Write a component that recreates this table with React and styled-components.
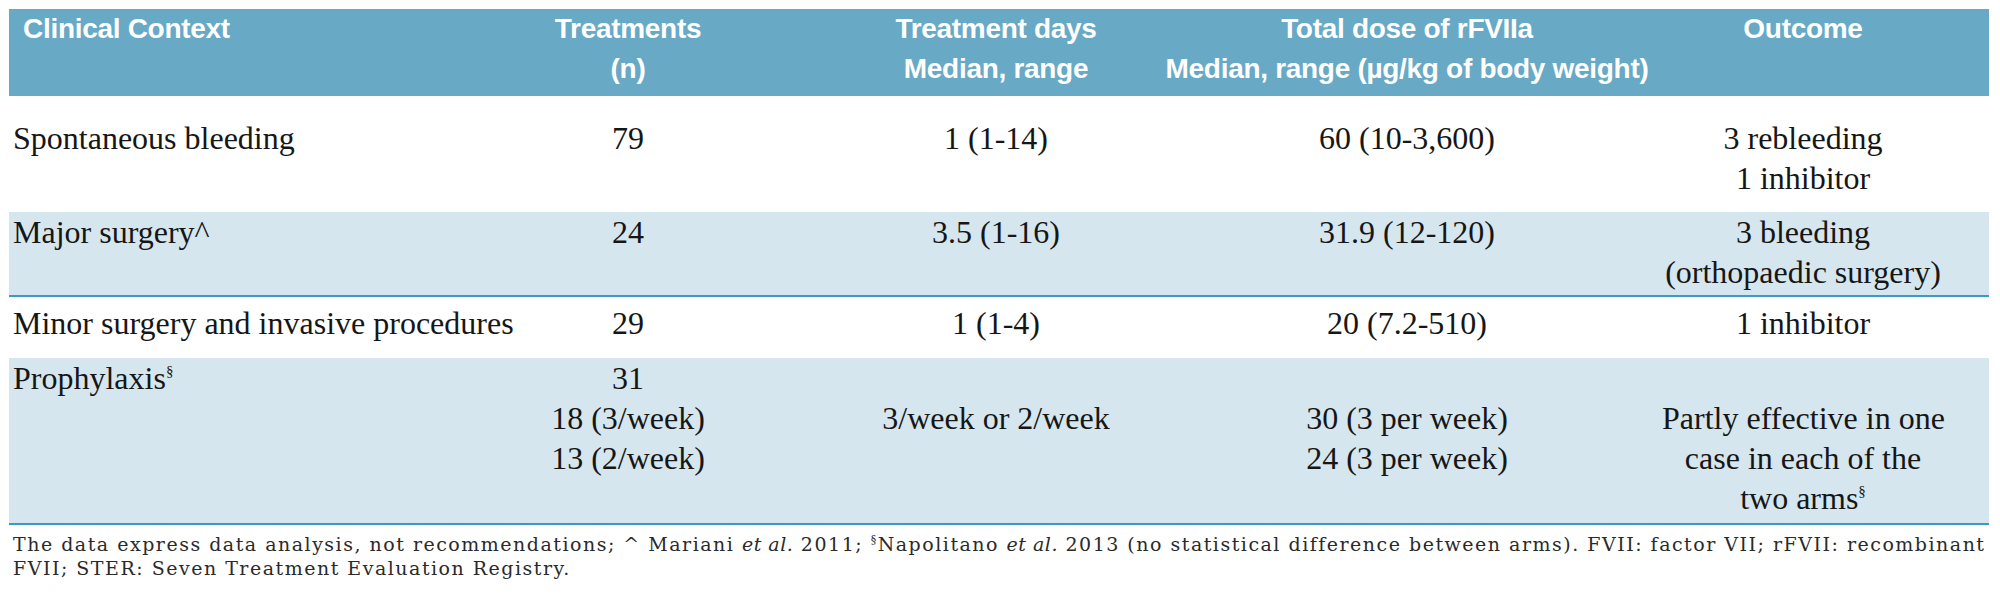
import React from "react";
import styled, { createGlobalStyle } from "styled-components";

const GlobalStyle = createGlobalStyle`
    html, body {
        margin: 0;
        padding: 0;
        background: #fff;
    }
`;

const COLS = [
    { w: 511, align: "left", pl: 4, hpl: 14 },
    { w: 216, align: "center" },
    { w: 416, align: "center", pl: 104 },
    { w: 510, align: "center" },
    { w: 327, align: "center", pr: 45 },
];

const TEMPLATE = COLS.map(c => `${c.w}px`).join(" ");

const HEAD = [
    ["Clinical Context"],
    ["Treatments", "(n)"],
    ["Treatment days", "Median, range"],
    ["Total dose of rFVIIa", "Median, range (\u00b5g/kg of body weight)"],
    ["Outcome"],
];

const S = () => <Sup>§</Sup>;

const ROWS = [
    {
        shaded: false, pt: 22, h: 116,
        cells: [
            ["Spontaneous bleeding"],
            ["79"],
            ["1 (1-14)"],
            ["60 (10-3,600)"],
            ["3 rebleeding", "1 inhibitor"],
        ],
    },
    {
        shaded: true, line: true, pt: 0, h: 83,
        cells: [
            ["Major surgery^"],
            ["24"],
            ["3.5 (1-16)"],
            ["31.9 (12-120)"],
            ["3 bleeding", "(orthopaedic surgery)"],
        ],
    },
    {
        shaded: false, pt: 6, h: 61,
        cells: [
            ["Minor surgery and invasive procedures"],
            ["29"],
            ["1 (1-4)"],
            ["20 (7.2-510)"],
            ["1 inhibitor"],
        ],
    },
    {
        shaded: true, line: true, pt: 0, h: 165,
        cells: [
            [<>Prophylaxis<S /></>],
            ["31", "18 (3/week)", "13 (2/week)"],
            ["\u00a0", "3/week or 2/week"],
            ["\u00a0", "30 (3 per week)", "24 (3 per week)"],
            ["\u00a0", "Partly effective in one", "case in each of the", <>two arms<S /></>],
        ],
    },
];

export default function App() {
    return (
        <Page>
            <GlobalStyle />
            <Table>
                <HeadRow>
                    {HEAD.map((lines, i) => (
                        <HeadCell key={i} $align={COLS[i].align} $pl={COLS[i].hpl ?? COLS[i].pl} $pr={COLS[i].pr}>
                            {lines.map((l, j) => <Line key={j}>{l}</Line>)}
                        </HeadCell>
                    ))}
                </HeadRow>
                {ROWS.map((row, r) => (
                    <BodyRow key={r} $shaded={row.shaded} $line={row.line} $pt={row.pt} $h={row.h}>
                        {row.cells.map((lines, i) => (
                            <Cell key={i} $align={COLS[i].align} $pl={COLS[i].pl} $pr={COLS[i].pr}>
                                {lines.map((l, j) => <Line key={j}>{l}</Line>)}
                            </Cell>
                        ))}
                    </BodyRow>
                ))}
            </Table>
            <Footnote>
                <FootLine>
                    The data express data analysis, not recommendations; ^ Mariani <i>et al.</i> 2011;{" "}
                    <FootSup>§</FootSup>Napolitano <i>et al.</i> 2013 (no statistical difference between arms).
                    FVII: factor VII; rFVII: recombinant
                </FootLine>
                <FootLine>FVII; STER: Seven Treatment Evaluation Registry.</FootLine>
            </Footnote>
        </Page>
    );
}

const Page = styled.div`
    padding: 9px 0 0 9px;
    width: 1980px;
`;

const Table = styled.div`
    display: flex;
    flex-direction: column;
    width: 1980px;
`;

const HeadRow = styled.div`
    display: grid;
    grid-template-columns: ${TEMPLATE};
    height: 87px;
    background: #68a9c6;
    color: #fff;
    font-family: "Liberation Sans", Arial, sans-serif;
    font-weight: bold;
    font-size: 28px;
    line-height: 40px;
    letter-spacing: -0.3px;
`;

const HeadCell = styled.div`
    text-align: ${p => p.$align};
    padding-left: ${p => p.$pl || 0}px;
    padding-right: ${p => p.$pr || 0}px;
    white-space: nowrap;
`;

const BodyRow = styled.div`
    display: grid;
    grid-template-columns: ${TEMPLATE};
    box-sizing: border-box;
    height: ${p => p.$h + (p.$line ? 2 : 0)}px;
    padding-top: ${p => p.$pt}px;
    background: ${p => (p.$shaded ? "#d5e6ef" : "#fff")};
    border-bottom: ${p => (p.$line ? "2px solid #3b9bc4" : "none")};
    font-family: "Liberation Serif", "Times New Roman", serif;
    font-size: 32px;
    line-height: 40px;
    color: #161616;
`;

const Cell = styled.div`
    text-align: ${p => p.$align};
    padding-left: ${p => p.$pl || 0}px;
    padding-right: ${p => p.$pr || 0}px;
    white-space: nowrap;
`;

const Line = styled.div``;

const Sup = styled.sup`
    font-size: 15px;
    line-height: 0;
    vertical-align: 13px;
`;

const Footnote = styled.div`
    padding: 7px 0 0 4px;
    font-family: "DejaVu Serif", serif;
    font-size: 19px;
    line-height: 24px;
    letter-spacing: 1.5px;
    color: #2a2a2a;

    i {
        font-style: italic;
        letter-spacing: 0.5px;
    }
`;

const FootLine = styled.div`
    white-space: nowrap;
`;

const FootSup = styled.sup`
    font-size: 11px;
    line-height: 0;
    vertical-align: 8px;
`;
